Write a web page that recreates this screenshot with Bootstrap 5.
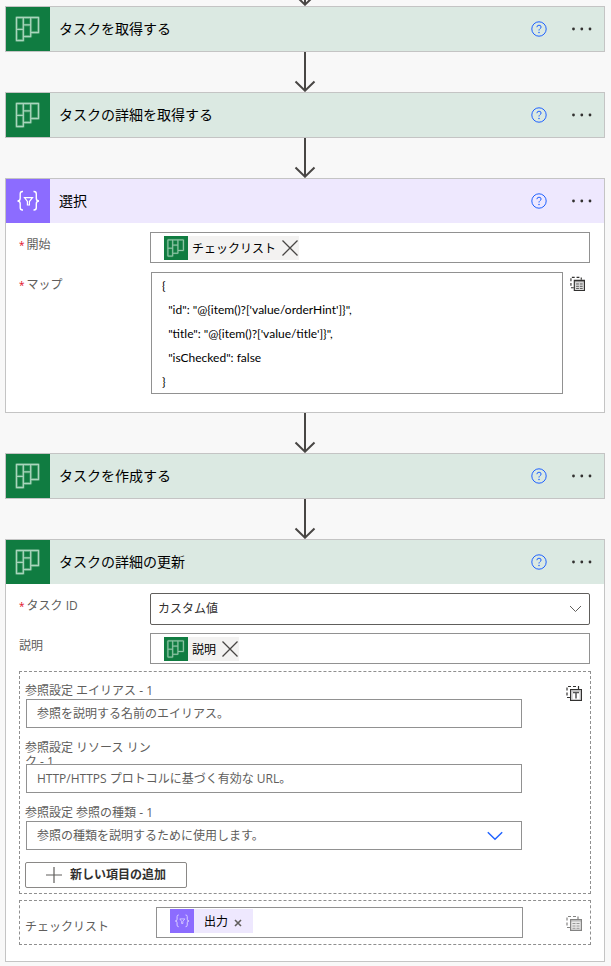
<!DOCTYPE html>
<html lang="ja">
<head>
<meta charset="utf-8">
<meta name="viewport" content="width=device-width, initial-scale=1">
<title>フロー</title>
<link href="https://cdn.jsdelivr.net/npm/bootstrap@5.3.0/dist/css/bootstrap.min.css" rel="stylesheet">
<style>
  body { background: #f8f8f8; color: #000; font: 12px/16px "Open Sans", "Noto Sans CJK JP", sans-serif; }
  svg { display: block; flex: none; }
  .flow { padding: 0 6px 4px 5px; }
  .flow-arrow { height: 40px; overflow: hidden; color: #484644; }
  .flow-arrow-cut { height: 6px; }
  .step { background: #fff; border: 1px solid #c4c4c4; }
  .step-head { height: 44px; background: #dbe9e2; padding-right: 11px; }
  .step-head h2 { font-size: 14px; line-height: 20px; font-weight: 400; margin-left: 9px; }
  .step-data .step-head { background: #eee8fe; }
  .tile { width: 44px; height: 44px; background: #107c41; color: #a9d5bc; }
  .tile-data { background: #8c6cff; color: #fff; }
  .icon-btn { border: 0; background: none; padding: 0; color: #323130; }
  .help-btn { color: #1f62ff; margin-right: 24px; }
  .step-body { padding: 9px 14px 16px 13px; }
  .step-data .step-body { padding-bottom: 18px; }
  .field-label { width: 131px; flex: none; color: #605e5c; padding-top: 5px; }
  .req { color: #e00b1c; font-size: 10px; margin-right: 2px; }
  .token-box { height: 31px; border: 1px solid #919191; background: #fff; padding: 3px 6px 0 13px; }
  .token-box input { border: 0; outline: 0; min-width: 0; height: 24px; background: none; }
  .token { height: 24px; background: #f3f2f1; padding-right: 1px; }
  .token-name { margin: 0 6px 0 4px; padding-top: 1px; }
  .token-data { background: #eee8fe; padding-right: 11px; }
  .token-data .token-name { margin: 0 6px 0 10px; }
  .token-icon { width: 24px; height: 24px; background: #107c41; color: #9bcdb0; }
  .token-data .token-icon { background: #8c6cff; color: #e4dcff; }
  .code-row { margin-top: 9px; }
  .code-box { height: 122px; border: 1px solid #919191; border-radius: 0; padding: 1px 10px 0; font-family: Lato, "Noto Sans CJK JP", sans-serif; font-size: 12px; line-height: 24px; color: #000; resize: none; overflow: hidden; }
  .map-row { padding-left: 1px; }
  .side-icon { width: 27px; padding: 4px 0 0 7px; }
  .pick { position: relative; }
  .pick select { width: 100%; appearance: none; background: #fff; font-size: 12px; line-height: 16px; }
  .pick svg { position: absolute; top: 0; bottom: 0; margin: auto 0; pointer-events: none; }
  .pick-id select { height: 32px; border: 1px solid #605e5c; border-radius: 2px; padding: 0 7px; color: #323130; }
  .pick-id svg { right: 8px; color: #605e5c; }
  .dashed { border: 1px dashed #8f8f8f; margin-right: -1px; }
  .group { margin-top: 7px; padding: 11px 8px 5px 5px; }
  .group-fields { padding-right: 44px; }
  .sub-label { display: block; width: 134px; height: 16px; line-height: 14px; padding-top: 1px; color: #605e5c; }
  .sub-label-wrap { height: 24px; }
  .sub-field { display: block; position: relative; width: 100%; height: 29px; border: 1px solid #919191; border-radius: 0; background: #fff; padding: 0 10px; font-size: 12px; color: #605e5c; }
  .sub-field::placeholder { color: #605e5c; opacity: 1; }
  .indent { padding-left: 1px; margin-bottom: 12px; }
  .pick-kind svg { right: 19px; color: #1f62ff; }
  .add-btn { width: 162px; height: 26px; border: 1px solid #8a8886; border-radius: 2px; background: #fff; color: #323130; font-weight: 700; font-size: 12px; padding: 0; }
  .out-row { margin-top: 6px; padding: 6px 8px 6px 5px; }
  .out-row .token-box { margin-right: 43px; padding-top: 1px; }
</style>
</head>
<body>
<svg width="0" height="0" class="position-absolute" aria-hidden="true">
  <symbol id="planner" viewBox="0 0 44 44"><g fill="none" stroke="currentColor" stroke-linejoin="round"><path d="M10.500 10.500H32.500V25.500H24.700V29.500H17.300V33.500H10.500ZM17.300 10.500V29.500M24.700 10.500V25.500M10.500 22.300H17.300M17.300 17.900H24.700" stroke-width="3" opacity=".25"/><path d="M10.500 10.500H32.500V25.500H24.700V29.500H17.300V33.500H10.500ZM17.300 10.500V29.500M24.700 10.500V25.500M10.500 22.300H17.300M17.300 17.900H24.700" stroke-width="1.300"/></g></symbol>
  <symbol id="filter" viewBox="0 0 44 44"><g fill="none" stroke="currentColor" stroke-width="1.400"><path d="M17 12.500H16.500Q14.200 12.500 14.200 15V19.200Q14.200 22 11.500 22Q14.200 22 14.200 24.800V28.500Q14.200 31 16.500 31H17M27.500 12.500H28Q30.300 12.500 30.300 15V19.200Q30.300 22 33 22Q30.300 22 30.300 24.800V28.500Q30.300 31 28 31H27.500"/><path d="M18.500 18.700H26.500L23.400 22.500V26H21.400V22.500Z" stroke-width="1.200"/></g></symbol>
  <symbol id="help" viewBox="0 0 16 16"><circle cx="8" cy="8" r="7.200" fill="none" stroke="currentColor"/><path d="M5.900 6.200Q6 4.200 8 4.200Q10.100 4.200 10.100 6Q10.100 7 9 7.700Q8 8.400 8 9.500" fill="none" stroke="currentColor"/><circle cx="8" cy="11.500" r=".75" fill="currentColor"/></symbol>
  <symbol id="dots" viewBox="0 0 22 16"><g fill="currentColor"><circle cx="2.500" cy="8" r="1.400"/><circle cx="10.800" cy="8" r="1.400"/><circle cx="19" cy="8" r="1.400"/></g></symbol>
  <symbol id="arrow" viewBox="0 0 22 40"><path d="M11 0V38.500M1.500 29.500L11 38.700L20.500 29.500" fill="none" stroke="currentColor" stroke-width="2"/></symbol>
  <symbol id="cross" viewBox="0 0 16 16"><path d="M.5.5L15.500 15.500M15.500.5L.5 15.500" stroke="#484644" stroke-width="1.300"/></symbol>
  <symbol id="list-switch" viewBox="0 0 16 16"><path d="M4 12.500H1V1.500H12V4" fill="none" stroke="currentColor" stroke-width="1.200" stroke-dasharray="3 2"/><path d="M4.600 4.600H15.400V15.400H4.600Z" fill="#ddd" stroke="currentColor" stroke-width="1.200"/><path d="M5 6H15" stroke="currentColor" stroke-opacity=".5"/><path d="M6.500 8.500H9.500M10.500 8.500H13.500M6.500 11H9.500M10.500 11H13.500M6.500 13.300H9.500M10.500 13.300H13.500" stroke="currentColor" stroke-width=".8"/></symbol>
  <symbol id="text-switch" viewBox="0 0 16 16"><path d="M4 12.500H1V1.500H12.500V4" fill="none" stroke="currentColor" stroke-width="1.200" stroke-dasharray="3 2"/><path d="M4.600 4.600H15.400V15.400H4.600Z" fill="#fff" stroke="currentColor" stroke-width="1.200"/><path d="M5 6H15M6 5V15M14.200 5V15" stroke="#bbb"/><path d="M7 7.500H13M10 7.500V13.500" stroke="#555" stroke-width="1.500"/></symbol>
</svg>
<main class="flow d-flex flex-column">
  <div class="flow-arrow flow-arrow-cut d-flex justify-content-center align-items-end"><svg width="22" height="40"><use href="#arrow"/></svg></div>

  <section class="step">
    <header class="step-head d-flex align-items-center">
      <span class="tile"><svg width="44" height="44"><use href="#planner"/></svg></span>
      <h2 class="mb-0 flex-grow-1">タスクを取得する</h2>
      <button class="icon-btn help-btn" aria-label="ヘルプ"><svg width="16" height="16"><use href="#help"/></svg></button>
      <button class="icon-btn" aria-label="メニュー"><svg width="22" height="16"><use href="#dots"/></svg></button>
    </header>
  </section>
  <div class="flow-arrow d-flex justify-content-center"><svg width="22" height="40"><use href="#arrow"/></svg></div>

  <section class="step">
    <header class="step-head d-flex align-items-center">
      <span class="tile"><svg width="44" height="44"><use href="#planner"/></svg></span>
      <h2 class="mb-0 flex-grow-1">タスクの詳細を取得する</h2>
      <button class="icon-btn help-btn" aria-label="ヘルプ"><svg width="16" height="16"><use href="#help"/></svg></button>
      <button class="icon-btn" aria-label="メニュー"><svg width="22" height="16"><use href="#dots"/></svg></button>
    </header>
  </section>
  <div class="flow-arrow d-flex justify-content-center"><svg width="22" height="40"><use href="#arrow"/></svg></div>

  <section class="step step-data">
    <header class="step-head d-flex align-items-center">
      <span class="tile tile-data"><svg width="44" height="44"><use href="#filter"/></svg></span>
      <h2 class="mb-0 flex-grow-1">選択</h2>
      <button class="icon-btn help-btn" aria-label="ヘルプ"><svg width="16" height="16"><use href="#help"/></svg></button>
      <button class="icon-btn" aria-label="メニュー"><svg width="22" height="16"><use href="#dots"/></svg></button>
    </header>
    <div class="step-body">
      <div class="d-flex">
        <label class="field-label" for="from"><span class="req">*</span>開始</label>
        <div class="token-box d-flex flex-grow-1">
          <span class="token d-flex align-items-center">
            <span class="token-icon"><svg width="24" height="24" viewBox="5 5 34 34"><use href="#planner" width="44" height="44"/></svg></span>
            <span class="token-name">チェックリスト</span>
            <button class="icon-btn" aria-label="削除"><svg width="16" height="16"><use href="#cross"/></svg></button>
          </span>
          <input id="from" class="flex-grow-1" type="text">
        </div>
      </div>
      <div class="code-row d-flex">
        <label class="field-label" for="map"><span class="req">*</span>マップ</label>
        <div class="map-row flex-grow-1">
          <textarea id="map" class="code-box w-100 d-block" spellcheck="false">{
  "id": "@{item()?['value/orderHint']}",
  "title": "@{item()?['value/title']}",
  "isChecked": false
}</textarea>
        </div>
        <div class="side-icon"><button class="icon-btn" aria-label="入力の切り替え"><svg width="15" height="15"><use href="#list-switch"/></svg></button></div>
      </div>
    </div>
  </section>
  <div class="flow-arrow d-flex justify-content-center"><svg width="22" height="40"><use href="#arrow"/></svg></div>

  <section class="step">
    <header class="step-head d-flex align-items-center">
      <span class="tile"><svg width="44" height="44"><use href="#planner"/></svg></span>
      <h2 class="mb-0 flex-grow-1">タスクを作成する</h2>
      <button class="icon-btn help-btn" aria-label="ヘルプ"><svg width="16" height="16"><use href="#help"/></svg></button>
      <button class="icon-btn" aria-label="メニュー"><svg width="22" height="16"><use href="#dots"/></svg></button>
    </header>
  </section>
  <div class="flow-arrow d-flex justify-content-center"><svg width="22" height="40"><use href="#arrow"/></svg></div>

  <section class="step">
    <header class="step-head d-flex align-items-center">
      <span class="tile"><svg width="44" height="44"><use href="#planner"/></svg></span>
      <h2 class="mb-0 flex-grow-1">タスクの詳細の更新</h2>
      <button class="icon-btn help-btn" aria-label="ヘルプ"><svg width="16" height="16"><use href="#help"/></svg></button>
      <button class="icon-btn" aria-label="メニュー"><svg width="22" height="16"><use href="#dots"/></svg></button>
    </header>
    <div class="step-body">
      <div class="d-flex mb-2">
        <label class="field-label" for="task"><span class="req">*</span>タスク ID</label>
        <div class="pick pick-id flex-grow-1">
          <select id="task"><option>カスタム値</option></select>
          <svg width="13" height="8" viewBox="0 0 13 8"><path d="M1 1L6.500 6.500L12 1" fill="none" stroke="currentColor"/></svg>
        </div>
      </div>
      <div class="d-flex">
        <label class="field-label" for="desc">説明</label>
        <div class="token-box d-flex flex-grow-1">
          <span class="token d-flex align-items-center">
            <span class="token-icon"><svg width="24" height="24" viewBox="5 5 34 34"><use href="#planner" width="44" height="44"/></svg></span>
            <span class="token-name">説明</span>
            <button class="icon-btn" aria-label="削除"><svg width="16" height="16"><use href="#cross"/></svg></button>
          </span>
          <input id="desc" class="flex-grow-1" type="text">
        </div>
      </div>

      <div class="dashed group d-flex align-items-start">
        <div class="group-fields flex-grow-1">
          <label class="sub-label" for="alias">参照設定 エイリアス - 1</label>
          <div class="indent"><input id="alias" class="sub-field" type="text" placeholder="参照を説明する名前のエイリアス。"></div>
          <label class="sub-label sub-label-wrap" for="link">参照設定 リソース リンク - 1</label>
          <div class="indent"><input id="link" class="sub-field" type="text" placeholder="HTTP/HTTPS プロトコルに基づく有効な URL。"></div>
          <label class="sub-label" for="kind">参照設定 参照の種類 - 1</label>
          <div class="indent">
            <div class="pick pick-kind">
              <select id="kind" class="sub-field"><option>参照の種類を説明するために使用します。</option></select>
              <svg width="16" height="10" viewBox="0 0 16 10"><path d="M.8 1.200L8 8.300L15.200 1.200" fill="none" stroke="currentColor" stroke-width="1.400"/></svg>
            </div>
          </div>
          <button class="add-btn d-flex align-items-center justify-content-center gap-2">
            <svg width="16" height="16" viewBox="0 0 16 16"><path d="M8 0V16M0 8H16" stroke="#605e5c" stroke-width="1.200"/></svg>新しい項目の追加
          </button>
        </div>
        <button class="icon-btn" aria-label="入力の切り替え"><svg width="16" height="20" viewBox="0 -2 16 20"><use href="#text-switch" width="16" height="16"/></svg></button>
      </div>

      <div class="dashed out-row d-flex align-items-center">
        <label class="field-label pt-2" for="check">チェックリスト</label>
        <div class="token-box d-flex flex-grow-1">
          <span class="token token-data d-flex align-items-center">
            <span class="token-icon"><svg width="24" height="24" viewBox="3 3 38 38"><use href="#filter" width="44" height="44"/></svg></span>
            <span class="token-name">出力</span>
            <button class="icon-btn pt-1" aria-label="削除"><svg width="8" height="8" viewBox="0 0 8 8"><path d="M1 1L7 7M7 1L1 7" stroke="#605e5c" stroke-width="1.600"/></svg></button>
          </span>
          <input id="check" class="flex-grow-1" type="text">
        </div>
        <button class="icon-btn" aria-label="入力の切り替え"><svg width="16" height="16" opacity=".6"><use href="#list-switch"/></svg></button>
      </div>
    </div>
  </section>
</main>
<script src="https://cdn.jsdelivr.net/npm/bootstrap@5.3.0/dist/js/bootstrap.bundle.min.js"></script>
</body>
</html>
